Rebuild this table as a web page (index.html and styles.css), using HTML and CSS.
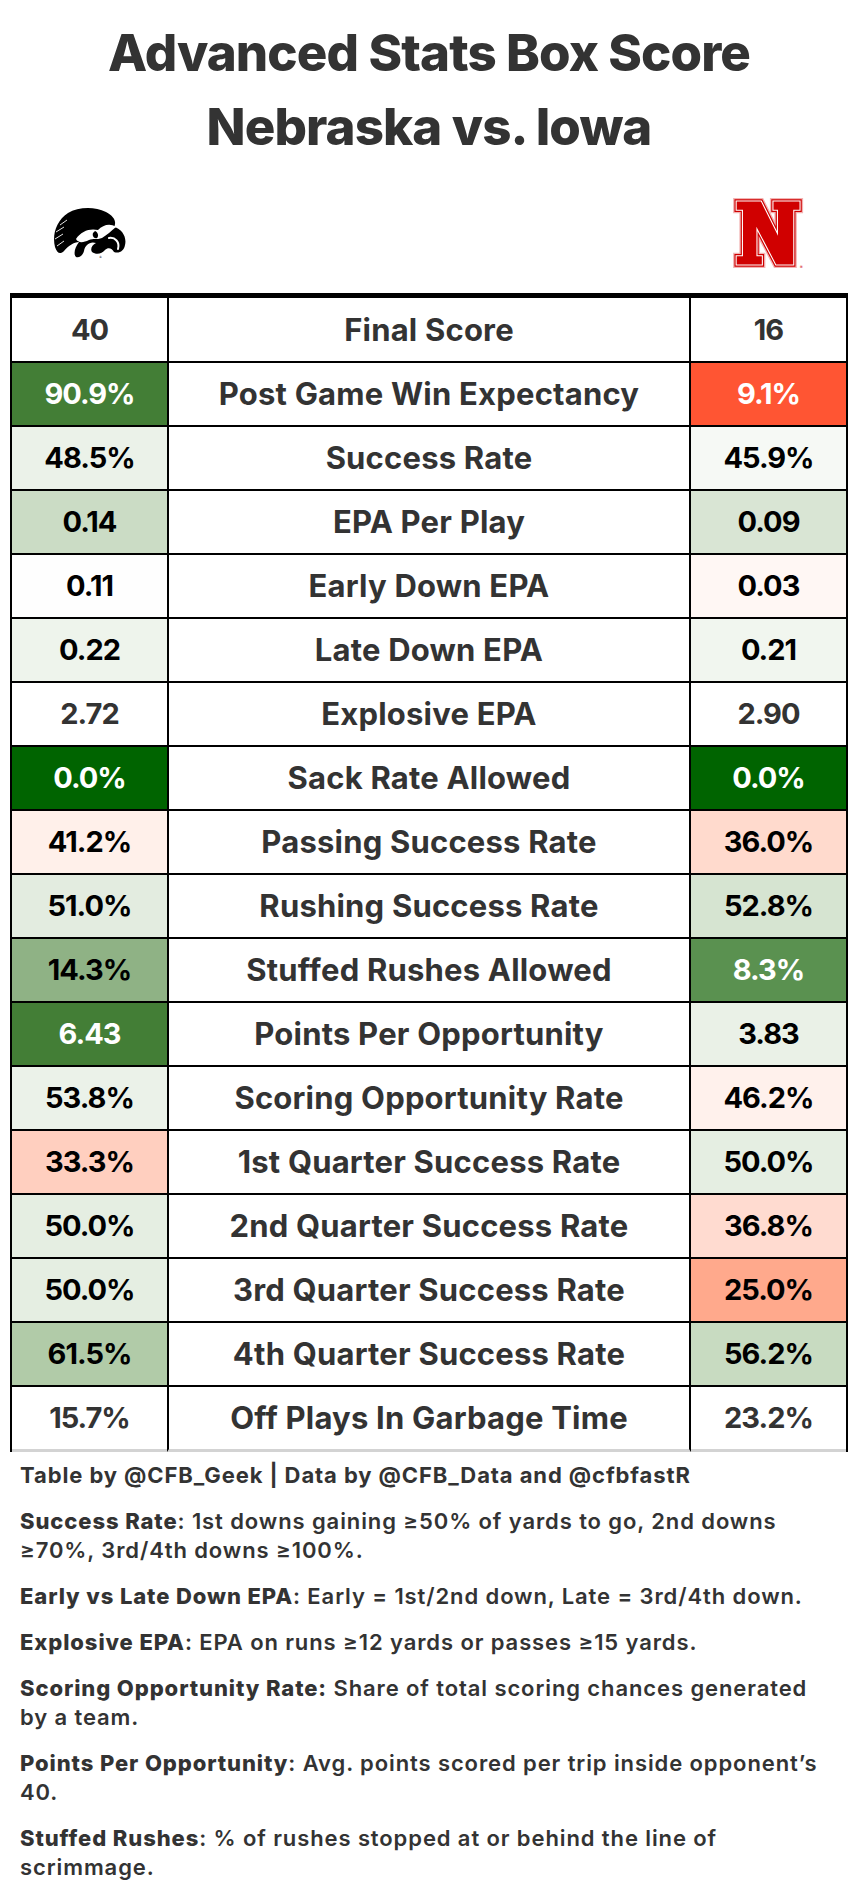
FILE: index.html
```html
<!DOCTYPE html>
<html lang="en">
<head>
<meta charset="utf-8">
<title>Advanced Stats Box Score</title>
<link rel="stylesheet" href="styles.css">
</head>
<body>
<main class="page">
  <h1 class="title">Advanced Stats Box Score<br>Nebraska vs. Iowa</h1>

  <div class="logos">
    <div class="logo-cell">
      <svg class="hawk" width="74" height="52" viewBox="0 0 74 52" aria-label="Iowa">
        <path fill="#000" d="M3,40 C0,28 4,14 16,6 C26,0 42,-1 54,5 C62,9 65,15 62,20 C70,22 75,30 73,38 C72,44 67,47 62,45 C60,41 56,40 53,43 C50,47 44,48 40,45 C38,42 40,38 44,36 C38,34 33,38 32,44 C31,48 28,51 24,50 C21,47 23,40 27,35 C22,35 16,39 12,44 C8,48 5,46 3,40 Z"/>
        <path fill="#fff" d="M24,32 C29,24 38,21 46,23 C51,18 58,16 64,20 C59,24 55,28 50,31 C45,33 41,31 37,33 C31,36 26,36 24,32 Z"/>
        <path fill="#000" d="M43,24 C46,25 47,29 45,31 C42,32 40,29 41,26 Z"/>
        <path fill="none" stroke="#fff" stroke-width="2" stroke-linecap="round" d="M57,31 C63,30 68,35 66,42"/>
        <path fill="none" stroke="#fff" stroke-width="0.9" d="M3,32 L11,27 M4,25 L12,20 M8,18 L15,13 M5,39 L12,34"/>
        <text x="47" y="51" font-size="3" fill="#000" font-family="DejaVu Sans, sans-serif">®</text>
      </svg>
    </div>
    <div></div>
    <div class="logo-cell">
      <svg class="nlogo" width="72" height="70" viewBox="-4 -4 80 78" aria-label="Nebraska">
        <polygon fill="none" stroke="#f2b3b3" stroke-width="8" points="0,0 27,0 46,38 46,9 41,9 41,0 70,0 70,9 63,9 63,70 44,70 22,28 22,61 28,61 28,70 0,70 0,61 7,61 7,9 0,9"/>
        <polygon fill="none" stroke="#d00000" stroke-width="5" points="0,0 27,0 46,38 46,9 41,9 41,0 70,0 70,9 63,9 63,70 44,70 22,28 22,61 28,61 28,70 0,70 0,61 7,61 7,9 0,9"/>
        <polygon fill="none" stroke="#fff" stroke-width="2.4" points="0,0 27,0 46,38 46,9 41,9 41,0 70,0 70,9 63,9 63,70 44,70 22,28 22,61 28,61 28,70 0,70 0,61 7,61 7,9 0,9"/>
        <polygon fill="#d00000" points="0,0 27,0 46,38 46,9 41,9 41,0 70,0 70,9 63,9 63,70 44,70 22,28 22,61 28,61 28,70 0,70 0,61 7,61 7,9 0,9"/>
        <text x="70" y="74" font-size="4" fill="#d00000" font-family="DejaVu Sans, sans-serif">®</text>
      </svg>
    </div>
  </div>

  <table class="box">
    <thead>
      <tr>
        <th class="side">40</th>
        <th class="mid">Final Score</th>
        <th class="side">16</th>
      </tr>
    </thead>
    <tbody>
      <tr>
        <td class="side dark" style="background:#437e36">90.9%</td>
        <td class="mid">Post Game Win Expectancy</td>
        <td class="side dark" style="background:#ff5533">9.1%</td>
      </tr>
      <tr>
        <td class="side" style="background:#ebf2e9">48.5%</td>
        <td class="mid">Success Rate</td>
        <td class="side" style="background:#f6f9f5">45.9%</td>
      </tr>
      <tr>
        <td class="side" style="background:#cbdcc5">0.14</td>
        <td class="mid">EPA Per Play</td>
        <td class="side" style="background:#d9e5d4">0.09</td>
      </tr>
      <tr>
        <td class="side" style="background:#fefefe">0.11</td>
        <td class="mid">Early Down EPA</td>
        <td class="side" style="background:#fff7f4">0.03</td>
      </tr>
      <tr>
        <td class="side" style="background:#eef4ec">0.22</td>
        <td class="mid">Late Down EPA</td>
        <td class="side" style="background:#f1f6ef">0.21</td>
      </tr>
      <tr>
        <td class="side neutral">2.72</td>
        <td class="mid">Explosive EPA</td>
        <td class="side neutral">2.90</td>
      </tr>
      <tr>
        <td class="side dark" style="background:#006400">0.0%</td>
        <td class="mid">Sack Rate Allowed</td>
        <td class="side dark" style="background:#006400">0.0%</td>
      </tr>
      <tr>
        <td class="side" style="background:#fff0ea">41.2%</td>
        <td class="mid">Passing Success Rate</td>
        <td class="side" style="background:#ffdacd">36.0%</td>
      </tr>
      <tr>
        <td class="side" style="background:#e3ece0">51.0%</td>
        <td class="mid">Rushing Success Rate</td>
        <td class="side" style="background:#d6e4d1">52.8%</td>
      </tr>
      <tr>
        <td class="side" style="background:#8fb285">14.3%</td>
        <td class="mid">Stuffed Rushes Allowed</td>
        <td class="side dark" style="background:#5a9150">8.3%</td>
      </tr>
      <tr>
        <td class="side dark" style="background:#437e36">6.43</td>
        <td class="mid">Points Per Opportunity</td>
        <td class="side" style="background:#eaf1e7">3.83</td>
      </tr>
      <tr>
        <td class="side" style="background:#ebf2e9">53.8%</td>
        <td class="mid">Scoring Opportunity Rate</td>
        <td class="side" style="background:#fff1ec">46.2%</td>
      </tr>
      <tr>
        <td class="side" style="background:#ffcfbf">33.3%</td>
        <td class="mid">1st Quarter Success Rate</td>
        <td class="side" style="background:#e5eee2">50.0%</td>
      </tr>
      <tr>
        <td class="side" style="background:#e5eee2">50.0%</td>
        <td class="mid">2nd Quarter Success Rate</td>
        <td class="side" style="background:#ffdbd0">36.8%</td>
      </tr>
      <tr>
        <td class="side" style="background:#e5eee2">50.0%</td>
        <td class="mid">3rd Quarter Success Rate</td>
        <td class="side" style="background:#ffa98c">25.0%</td>
      </tr>
      <tr>
        <td class="side" style="background:#b1cba8">61.5%</td>
        <td class="mid">4th Quarter Success Rate</td>
        <td class="side" style="background:#c8dbc1">56.2%</td>
      </tr>
      <tr class="last">
        <td class="side neutral">15.7%</td>
        <td class="mid">Off Plays In Garbage Time</td>
        <td class="side neutral">23.2%</td>
      </tr>
    </tbody>
  </table>

  <section class="notes">
    <p class="credit">Table by @CFB_Geek | Data by @CFB_Data and @cfbfastR</p>
    <p><strong>Success Rate</strong>: 1st downs gaining ≥50% of yards to go, 2nd downs ≥70%, 3rd/4th downs ≥100%.</p>
    <p><strong>Early vs Late Down EPA</strong>: Early = 1st/2nd down, Late = 3rd/4th down.</p>
    <p><strong>Explosive EPA</strong>: EPA on runs ≥12 yards or passes ≥15 yards.</p>
    <p><strong>Scoring Opportunity Rate:</strong> Share of total scoring chances generated by a team.</p>
    <p><strong>Points Per Opportunity</strong>: Avg. points scored per trip inside opponent’s 40.</p>
    <p><strong>Stuffed Rushes</strong>: % of rushes stopped at or behind the line of scrimmage.</p>
  </section>
</main>
</body>
</html>
```

FILE: styles.css
```css
* {
  box-sizing: border-box;
}

body {
  margin: 0;
  background: #ffffff;
  color: #333333;
  font-family: Inter, "Noto Sans", "DejaVu Sans", sans-serif;
}

.page {
  padding: 16px 10px 0;
}

.title {
  margin: 0;
  text-align: center;
  font-size: 51px;
  line-height: 74px;
  font-weight: 800;
  color: #333333;
  letter-spacing: -0.9px;
}

.logos {
  display: grid;
  grid-template-columns: 158px 1fr 158px;
  align-items: center;
  height: 70px;
  margin-top: 34px;
  margin-bottom: 25px;
}

.logo-cell {
  display: flex;
  justify-content: center;
  align-items: center;
}

.hawk,
.nlogo {
  display: block;
}

.box {
  width: 838px;
  border-collapse: separate;
  border-spacing: 0;
  table-layout: fixed;
  border-left: 2px solid #000;
  border-right: 2px solid #000;
}

.box th,
.box td {
  padding: 0;
  height: 64px;
  border-bottom: 2px solid #000;
  text-align: center;
  vertical-align: middle;
  font-size: 31px;
  font-weight: 700;
  line-height: 38px;
  white-space: nowrap;
}

.box th {
  height: 70px;
  border-top: 5px solid #000;
  color: #333333;
  background: #ffffff;
}

.box .side {
  width: 155px;
  font-size: 29px;
  letter-spacing: -1px;
}

.box td.side {
  color: #000000;
}

.box td.side.neutral {
  color: #333333;
  background: #ffffff;
}

.box td.side.dark {
  color: #ffffff;
}

.box .mid {
  border-left: 2px solid #000;
  border-right: 2px solid #000;
  color: #333333;
  background: #ffffff;
  letter-spacing: 0.2px;
}

.box tr.last td {
  height: 65px;
  border-bottom: 3px solid #d3d3d3;
}

.notes {
  padding: 9px 10px 0;
  font-size: 22px;
  line-height: 29px;
  font-weight: 600;
  letter-spacing: 0.9px;
  color: #333333;
}

.notes p {
  margin: 0 0 17px;
}

.notes .credit {
  font-weight: 700;
}

.notes strong {
  font-weight: 800;
}
```
